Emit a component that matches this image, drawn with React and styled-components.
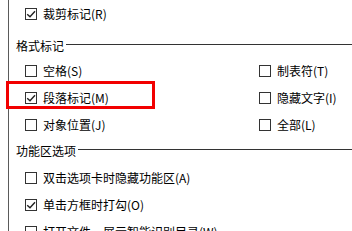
import React from "react";
import styled, { createGlobalStyle } from "styled-components";

const Global = createGlobalStyle`
  html, body { margin: 0; padding: 0; background: #ffffff; overflow: hidden; }
  body { font-family: "Noto Sans CJK SC", "Noto Sans", sans-serif; }
`;

const Page = styled.div`
  position: relative;
  width: 344px;
  height: 231px;
  margin-left: 8px;
  border-left: 1px solid #5a5a5a;
  color: #000;
  font-size: 12px;
`;

const Grid = styled.div`
  display: grid;
  grid-template-columns: 234px 1fr;
  padding-left: 16px;
`;

const Row = styled.label`
  display: flex;
  align-items: center;
  gap: 6px;
  height: 27px;
  grid-column: ${(p) => (p.$full ? "1 / -1" : "auto")};
  white-space: nowrap;
  line-height: 1;
`;

const Box = styled.span`
  box-sizing: border-box;
  width: 12px;
  height: 12px;
  flex: none;
  border: 1px solid #333;
  background: #fff;
  display: flex;
  align-items: center;
  justify-content: center;
`;

const Header = styled.div`
  grid-column: 1 / -1;
  display: flex;
  align-items: center;
  gap: 2px;
  height: 22px;
  margin-top: ${(p) => p.$top}px;
  margin-bottom: ${(p) => p.$bottom || 0}px;
  margin-left: -9px;
  white-space: nowrap;
  line-height: 1;
  &::after {
    content: "";
    flex: 1;
    height: 1px;
    background: #333;
    margin-top: -3px;
  }
`;

const Highlight = styled.div`
  position: absolute;
  left: -3px;
  top: 81px;
  width: 149px;
  height: 28px;
  box-sizing: border-box;
  border: 3px solid #f20000;
  pointer-events: none;
`;

const Check = () => (
  <svg width="10" height="10" viewBox="0 0 10 10">
    <path d="M1.2 5.2 L4 7.8 L9 2.2" fill="none" stroke="#222" strokeWidth="1.4" />
  </svg>
);

const Option = ({ checked, label, full }) => (
  <Row $full={full}>
    <Box>{checked && <Check />}</Box>
    <span>{label}</span>
  </Row>
);

export default function App() {
  return (
    <>
      <Global />
      <Page>
        <Grid>
          <Option checked full label="裁剪标记(R)" />
          <Header $top={8}>格式标记</Header>
          <Option label="空格(S)" />
          <Option label="制表符(T)" />
          <Option checked label="段落标记(M)" />
          <Option label="隐藏文字(I)" />
          <Option label="对象位置(J)" />
          <Option label="全部(L)" />
          <Header $top={2} $bottom={2}>功能区选项</Header>
          <Option full label="双击选项卡时隐藏功能区(A)" />
          <Option checked full label="单击方框时打勾(O)" />
          <Option full label="打开文件，展示智能识别目录(W)" />
        </Grid>
        <Highlight />
      </Page>
    </>
  );
}
